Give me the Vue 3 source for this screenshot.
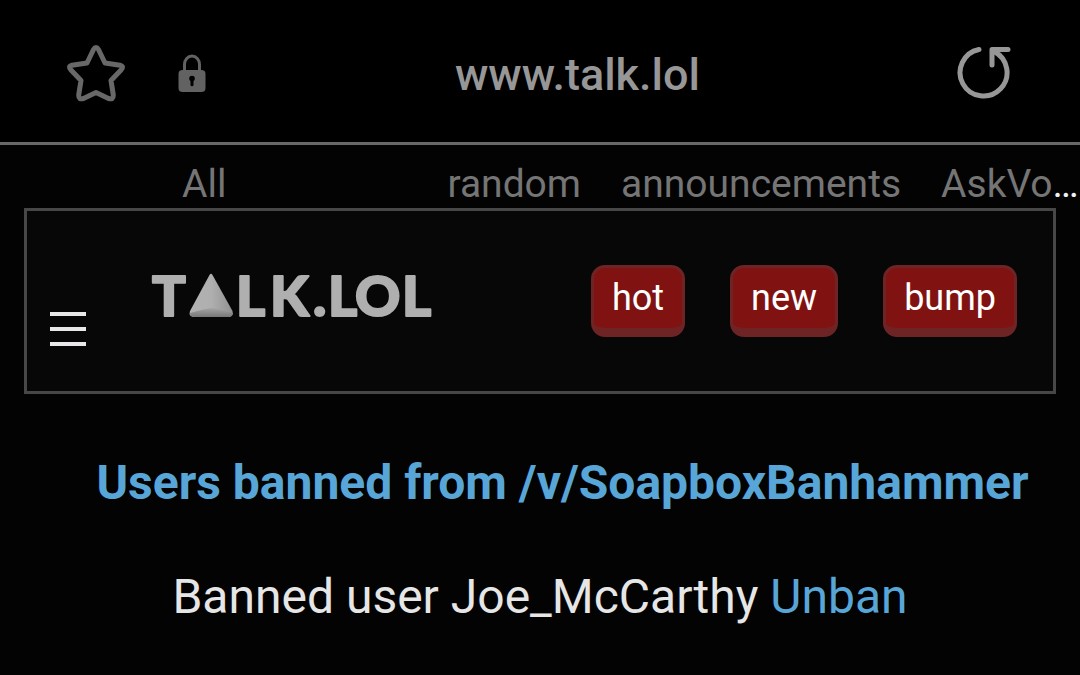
<script setup>
const topics = ['random', 'announcements', 'AskVo']
const sorts = ['hot', 'new', 'bump']
</script>

<template>
  <div class="page">
    <header class="browser-bar">
      <button class="icon-button" aria-label="Bookmark">
        <svg class="star" width="60" height="60" viewBox="0 0 60 60">
          <path d="M27.5 6.5Q30 2.500 32.500 6.500L39 20L54 22.200Q58.500 23.500 55 27L45 37.500L47.300 52Q47.500 57 42.500 55.500L30 49.500L17.500 55.500Q12.500 57 12.700 52L15 37.500L5 27Q1.500 23.500 6 22.200L21 20Z" />
        </svg>
      </button>
      <button class="icon-button" aria-label="Connection is secure">
        <svg width="28" height="40" viewBox="0 0 28 40">
          <path class="shackle" d="M6.500 19V11.500A7.500 8.500 0 0 1 21.500 11.500V19" />
          <rect class="lock-body" x="0.500" y="17" width="27" height="22" rx="4" />
          <circle class="keyhole" cx="14" cy="25.500" r="2.800" />
          <path class="keyhole" d="M12.500 26H15.500V32.500Q14 34 12.500 32.500Z" />
        </svg>
      </button>
      <span class="address">www.talk.lol</span>
      <button class="icon-button" aria-label="Reload">
        <svg class="reload" width="54" height="54" viewBox="0 0 54 54">
          <path d="M22 3.500A23.500 23.500 0 1 0 37 5.500" />
          <path d="M35 19V3.500H51" />
        </svg>
      </button>
    </header>

    <nav class="topics" aria-label="Topics">
      <a class="all" href="#all">All</a>
      <a v-for="topic in topics" :key="topic" class="topic" :href="'#' + topic">{{ topic }}</a>
      <span>…</span>
    </nav>

    <section class="masthead">
      <button class="menu" aria-label="Menu"><span></span><span></span><span></span></button>
      <a class="logo" href="#home" aria-label="TALK.LOL">
        <svg width="300" height="72" viewBox="0 -10 300 72">
          <defs>
            <linearGradient id="face" x1="0" x2="1">
              <stop offset="0" stop-color="#b2b2b2" />
              <stop offset="0.500" stop-color="#afafaf" />
              <stop offset="1" stop-color="#919191" />
            </linearGradient>
            <linearGradient id="base" x1="0" y1="0" x2="0" y2="1">
              <stop offset="0" stop-color="#a5a5a5" />
              <stop offset="1" stop-color="#777777" />
            </linearGradient>
          </defs>
          <text y="45" x="4 88 122 165 180 207 254">TLK.LOL</text>
          <path class="face" d="M61.500 4Q63 1.500 64.500 4L84.500 40Q86 46 80 46H47Q40 46 42 40Z" />
          <path class="base" d="M42 42Q56 38 63 37Q70 38 85 42Q84 46 80 46H47Q42 46 42 42Z" />
        </svg>
      </a>
      <div class="sorts">
        <button v-for="sort in sorts" :key="sort" class="sort">{{ sort }}</button>
      </div>
    </section>

    <main class="content">
      <h1><a href="#sub">Users banned from /v/SoapboxBanhammer</a></h1>
      <p>Banned user Joe_McCarthy <a href="#unban">Unban</a></p>
    </main>
  </div>
</template>

<style>
body {
  background: #030303;
}
</style>

<style scoped>
.page {
  min-height: 100vh;
  overflow: hidden;
  background: #030303;
  color: #e6e6e6;
  font-family: Roboto, "Liberation Sans", sans-serif;
}

button {
  margin: 0;
  padding: 0;
  border: 0;
  background: none;
  font: inherit;
  color: inherit;
}

a {
  color: #58a6d8;
  text-decoration: none;
}

svg {
  display: block;
}

.browser-bar {
  display: flex;
  align-items: center;
  height: 142px;
  padding: 0 69px 0 66px;
  border-bottom: 3px solid #686868;
  background: #000;
  gap: 52px;
}

.icon-button {
  padding-top: 4px;
}

.star {
  fill: none;
  stroke: #686868;
  stroke-width: 5;
  stroke-linejoin: round;
}

.shackle {
  fill: none;
  stroke: #626262;
  stroke-width: 3;
}

.lock-body {
  fill: #626262;
}

.keyhole {
  fill: #000;
}

.address {
  flex: 1;
  padding-top: 6px;
  padding-right: 8px;
  text-align: center;
  font-size: 45px;
  font-weight: 500;
  color: #979797;
}

.reload {
  fill: none;
  stroke: #979797;
  stroke-width: 5;
  stroke-linecap: round;
  stroke-linejoin: round;
}

.topics {
  display: flex;
  height: 63px;
  padding-left: 182px;
  padding-top: 15px;
  box-sizing: border-box;
  white-space: nowrap;
  font-size: 39px;
  line-height: 48px;
  color: #f0f0f0;
}

.topics a {
  color: #757575;
}

.all {
  margin-right: 221px;
}

.topic + .topic {
  margin-left: 40px;
}

.masthead {
  display: flex;
  align-items: flex-start;
  box-sizing: border-box;
  min-height: 186px;
  margin: 0 24px;
  padding: 54px 36px 45px 23px;
  border: 3px solid #474747;
  background: #070707;
}

.menu {
  display: flex;
  flex-direction: column;
  gap: 11px;
  width: 36px;
  margin-top: 47px;
}

.menu span {
  height: 4px;
  background: #e9e7e9;
}

.logo {
  margin-left: 62px;
  margin-top: -4px;
}

.logo text {
  font-family: Lato, "Liberation Sans", sans-serif;
  font-size: 56px;
  font-weight: 900;
  fill: #afafaf;
  stroke: #afafaf;
  stroke-width: 2;
  stroke-linejoin: round;
}

.face {
  fill: url(#face);
}

.base {
  fill: url(#base);
}

.sorts {
  display: flex;
  gap: 45px;
  margin-left: auto;
}

.sort {
  height: 72px;
  padding: 0 18px;
  border: 3px solid #6e2424;
  border-bottom-width: 9px;
  border-radius: 14px;
  background: #801312;
  color: #fff;
  font-size: 36px;
  line-height: 44px;
}

.content {
  text-align: center;
}

h1 {
  margin: 61px 0 0 45px;
  font-size: 48px;
  line-height: 56px;
  font-weight: 700;
}

p {
  margin: 58px 0 0;
  font-size: 48px;
  line-height: 56px;
}
</style>
